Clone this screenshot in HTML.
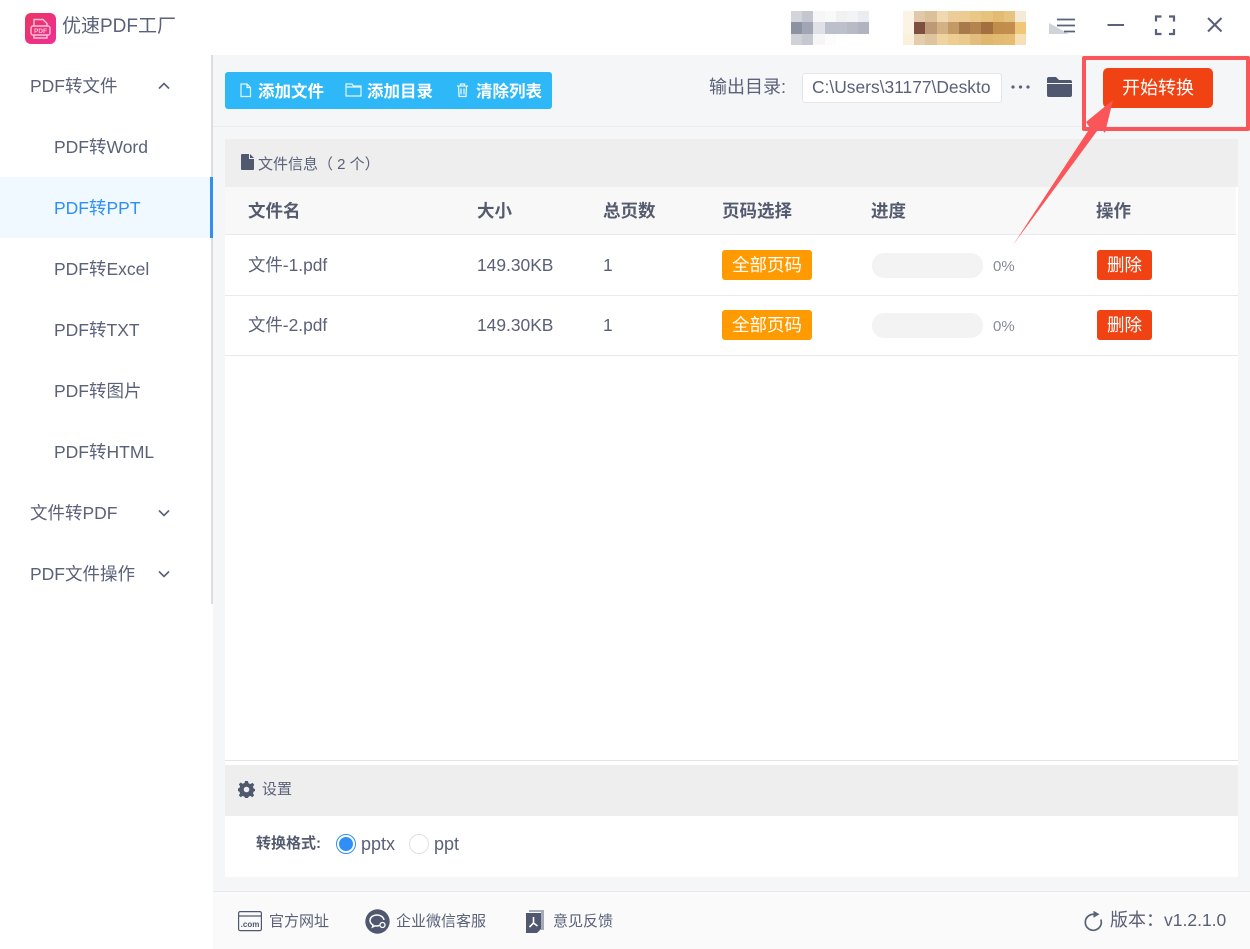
<!DOCTYPE html>
<html lang="zh-CN"><head><meta charset="utf-8"><title>优速PDF工厂</title>
<style>
*{margin:0;padding:0;box-sizing:border-box}
html,body{width:1250px;height:949px;overflow:hidden;background:#fff}
body{position:relative;font-family:"Liberation Sans","Noto Sans CJK SC",sans-serif;color:#5a6178}
.a{position:absolute}
.t{position:absolute;white-space:nowrap;line-height:20px}
.px{position:absolute;display:flex}
.px i{display:block;height:100%;flex:none;width:11.2px}
.b{font-weight:700;color:#555b6e;font-size:17.5px}
.s{font-size:17.4px;font-weight:400}
.m{font-size:17.5px}
.w{font-size:16.5px;font-weight:700;color:#fff}
.tag{position:absolute;height:30px;border-radius:3px;color:#fff;font-size:17.5px;line-height:30px;text-align:center}
svg{position:absolute;overflow:visible}
</style></head><body>

<!-- title bar -->
<div class="a" style="left:25px;top:13px;width:31px;height:31px;border-radius:6px;background:linear-gradient(135deg,#ea3560,#ef2f98)"></div>
<svg style="left:25px;top:13px" width="31" height="31" fill="none" stroke="#fbc3d6" stroke-width="1.4"><path d="M9 13V6.500h9l4 4V13"/><rect x="6" y="13" width="19" height="9" rx="2"/><path d="M9 22v3h13v-3"/><text x="15.500" y="20" font-size="6.500" font-weight="700" fill="#fbc3d6" stroke="none" text-anchor="middle" font-family="Liberation Sans">PDF</text></svg>
<div class="t" style="left:62px;top:17px;font-size:19px">优速PDF工厂</div>

<div class="px" style="left:791px;top:11px;height:11px"><i style="background:#d3d5db"></i><i style="background:#c4c7d0"></i><i style="background:#f6f6f8"></i><i style="background:#f9f9fa"></i><i style="background:#f0f1f3"></i><i style="background:#f2f3f5"></i><i style="background:#eaecef"></i></div>
<div class="px" style="left:791px;top:22px;height:12px"><i style="background:#8d92a2"></i><i style="background:#a2a6b4"></i><i style="background:#dfe1e6"></i><i style="background:#bcc0ca"></i><i style="background:#bcc0ca"></i><i style="background:#b8bbc6"></i><i style="background:#b0b4c0"></i></div>
<div class="px" style="left:791px;top:34px;height:11px"><i style="background:#cfd1d7"></i><i style="background:#c5c8cf"></i><i style="background:#f6f6f7"></i><i style="background:#fcfcfc"></i></div>

<div class="px" style="left:903px;top:11px;height:11px"><i style="background:#fbf4e6"></i><i style="background:#e0c8a8"></i><i style="background:#dcc09a"></i><i style="background:#f0d9b0"></i><i style="background:#eccd9a"></i><i style="background:#eccc92"></i><i style="background:#e9c887"></i><i style="background:#e7c27c"></i><i style="background:#e3bb72"></i><i style="background:#e6c37f"></i><i style="background:#f5ead8"></i></div>
<div class="px" style="left:903px;top:22px;height:12px"><i style="background:#fdf3e2"></i><i style="background:#7f4f42"></i><i style="background:#bd9a76"></i><i style="background:#d2b285"></i><i style="background:#c39a66"></i><i style="background:#a77a4a"></i><i style="background:#b3844f"></i><i style="background:#a27040"></i><i style="background:#c08d4c"></i><i style="background:#c18e4e"></i><i style="background:#f0c679"></i></div>
<div class="px" style="left:903px;top:34px;height:11px"><i style="background:#fbf0dc"></i><i style="background:#e3cdab"></i><i style="background:#dfc59f"></i><i style="background:#f0d49f"></i><i style="background:#eecd92"></i><i style="background:#ebc88c"></i><i style="background:#e3bd7e"></i><i style="background:#e0b76f"></i><i style="background:#e2ba72"></i><i style="background:#e4bc72"></i><i style="background:#f6dfb5"></i></div>

<svg style="left:1049px;top:23px" width="20" height="12"><path d="M0 0 L20 11 H0Z" fill="#d0d3db"/></svg>
<svg style="left:1055px;top:17px" width="22" height="18" stroke="#5a6178" stroke-width="1.700" fill="none"><path d="M2 2.500H20M2 8.500H20M9 14.500H20"/></svg>
<svg style="left:1106px;top:16px" width="20" height="20" stroke="#5a6178" stroke-width="2" fill="none"><path d="M1.500 9H18"/></svg>
<svg style="left:1155px;top:15px" width="21" height="21" stroke="#5a6178" stroke-width="2.200" fill="none"><path d="M1 6.500V1.500H6.500M14 1.500H19V6.500M19 14V19H14M6.500 19H1V14"/></svg>
<svg style="left:1206px;top:16px" width="18" height="18" stroke="#5a6178" stroke-width="2" fill="none"><path d="M2 2L15.500 15.500M15.500 2L2 15.500"/></svg>

<!-- sidebar -->
<div class="a" style="left:211px;top:55px;width:2px;height:549px;background:#dcdde3"></div>
<div class="t m" style="left:30px;top:76px">PDF转文件</div>
<svg style="left:157px;top:81px" width="14" height="10" stroke="#5a6178" stroke-width="1.600" fill="none"><path d="M2 7.500L7 2.500L12 7.500"/></svg>
<div class="t m" style="left:54px;top:137px">PDF转Word</div>
<div class="a" style="left:0;top:177px;width:213px;height:61px;background:#f0f9ff"></div>
<div class="a" style="left:210px;top:177px;width:3px;height:61px;background:#2f8ff4"></div>
<div class="t m" style="left:54px;top:198px;color:#2f8ff4">PDF转PPT</div>
<div class="t m" style="left:54px;top:259px">PDF转Excel</div>
<div class="t m" style="left:54px;top:320px">PDF转TXT</div>
<div class="t m" style="left:54px;top:381px">PDF转图片</div>
<div class="t m" style="left:54px;top:442px">PDF转HTML</div>
<div class="t m" style="left:30px;top:503px">文件转PDF</div>
<svg style="left:157px;top:508px" width="14" height="10" stroke="#5a6178" stroke-width="1.600" fill="none"><path d="M2 2.500L7 7.500L12 2.500"/></svg>
<div class="t m" style="left:30px;top:564px">PDF文件操作</div>
<svg style="left:157px;top:569px" width="14" height="10" stroke="#5a6178" stroke-width="1.600" fill="none"><path d="M2 2.500L7 7.500L12 2.500"/></svg>

<!-- main background -->
<div class="a" style="left:213px;top:55px;width:1037px;height:836px;background:#f5f6f8"></div>
<div class="a" style="left:213px;top:126px;width:1037px;height:1px;background:#ebecef"></div>

<!-- toolbar -->
<div class="a" style="left:225px;top:72px;width:327px;height:37px;border-radius:3px;background:#2eb8f8"></div>
<svg style="left:240px;top:83px" width="12" height="15" fill="none" stroke="#e4f6ff" stroke-width="1.200"><path d="M1 1H7L10.500 4.500V13.500H1Z M7 1V4.500H10.500"/></svg>
<div class="t w" style="left:258px;top:82px">添加文件</div>
<svg style="left:345px;top:83px" width="18" height="14" fill="none" stroke="#e4f6ff" stroke-width="1.200"><path d="M1 13V1H7L8.500 3H16V13Z M1 4H16"/></svg>
<div class="t w" style="left:367px;top:82px">添加目录</div>
<svg style="left:456px;top:83px" width="13" height="15" fill="none" stroke="#e4f6ff" stroke-width="1.300"><path d="M1 3H12M4.500 3V1H8.500V3M2.500 3L3 13.500H10L10.500 3M5 5.500V11.500M8 5.500V11.500"/></svg>
<div class="t w" style="left:476px;top:82px">清除列表</div>

<div class="t" style="left:709px;top:77px;font-size:18px">输出目录:</div>
<div class="a" style="left:802px;top:73px;width:200px;height:30px;background:#fff;border:1px solid #e3e5ea;border-radius:3px"></div>
<div class="t" style="left:812px;top:77px;font-size:17.4px;width:185px;overflow:hidden">C:\Users\31177\Deskto</div>
<svg style="left:1011px;top:84px" width="20" height="6" fill="#5a6178"><circle cx="2" cy="3" r="1.600"/><circle cx="9.500" cy="3" r="1.600"/><circle cx="17" cy="3" r="1.600"/></svg>
<svg style="left:1047px;top:76px" width="25" height="22" fill="#50586f"><path d="M0 3Q0 1 2 1H9L12 4H23Q25 4 25 6V7H0Z"/><path d="M0 8H25V19Q25 21 23 21H2Q0 21 0 19Z"/></svg>

<div class="tag" style="left:1103px;top:68px;width:110px;height:40px;line-height:40px;font-size:18px;background:#f04212;border-radius:5px">开始转换</div>

<!-- panel -->
<div class="a" style="left:225px;top:139px;width:1013px;height:738px;background:#fff"></div>
<div class="a" style="left:225px;top:139px;width:1013px;height:48px;background:#eeeeee"></div>
<svg style="left:241px;top:154px" width="13" height="16" fill="#50586f"><path d="M0 1Q0 0 1 0H8V5H13V15Q13 16 12 16H1Q0 16 0 15Z"/><path d="M9 0L13 4H9Z"/></svg>
<div class="t" style="left:258px;top:155px;font-size:15px">文件信息（ 2 个）</div>

<div class="a" style="left:225px;top:187px;width:1011px;height:48px;background:#f8f8f9;border-bottom:1px solid #e8e9ec"></div>
<div class="t b" style="left:248px;top:201px">文件名</div>
<div class="t b" style="left:477px;top:201px">大小</div>
<div class="t b" style="left:603px;top:201px">总页数</div>
<div class="t b" style="left:722px;top:201px">页码选择</div>
<div class="t b" style="left:871px;top:201px">进度</div>
<div class="t b" style="left:1096px;top:201px">操作</div>

<div class="a" style="left:225px;top:295px;width:1013px;height:1px;background:#e8e9ec"></div>
<div class="a" style="left:225px;top:355px;width:1013px;height:1px;background:#e8e9ec"></div>

<div class="t s" style="left:248px;top:255px">文件-1.pdf</div>
<div class="t s" style="left:477px;top:255px">149.30KB</div>
<div class="t s" style="left:603px;top:255px">1</div>
<div class="tag" style="left:722px;top:250px;width:90px;background:#ff9a00">全部页码</div>
<div class="a" style="left:872px;top:253px;width:111px;height:25px;border-radius:12px;background:#f3f3f4"></div>
<div class="t" style="left:993px;top:257px;font-size:15px;color:#868b9b">0%</div>
<div class="tag" style="left:1097px;top:250px;width:55px;background:#f04212">删除</div>

<div class="t s" style="left:248px;top:315px">文件-2.pdf</div>
<div class="t s" style="left:477px;top:315px">149.30KB</div>
<div class="t s" style="left:603px;top:315px">1</div>
<div class="tag" style="left:722px;top:310px;width:90px;background:#ff9a00">全部页码</div>
<div class="a" style="left:872px;top:313px;width:111px;height:25px;border-radius:12px;background:#f3f3f4"></div>
<div class="t" style="left:993px;top:317px;font-size:15px;color:#868b9b">0%</div>
<div class="tag" style="left:1097px;top:310px;width:55px;background:#f04212">删除</div>

<!-- settings -->
<div class="a" style="left:225px;top:760px;width:1013px;height:1px;background:#e3e4e8"></div>
<div class="a" style="left:225px;top:765px;width:1013px;height:51px;background:#eeeeee"></div>
<svg style="left:238px;top:781px" width="17" height="17" viewBox="0 0 17 17" fill="#50586f"><path fill-rule="evenodd" d="M7 0H10L10.500 2.300 12.400 3.100 14.400 1.800 16.200 3.800 14.900 5.700 15.700 7.600 17 8V10L15.700 10.600 14.900 12.400 16.200 14.300 14.300 16.200 12.400 14.900 10.500 15.700 10 17H7L6.500 15.700 4.600 14.900 2.700 16.200 .8 14.300 2.100 12.400 1.300 10.600 0 10V7.500L1.300 7.100 2.100 5.300 .8 3.400 2.700 1.500 4.600 2.800 6.500 2Z M8.500 5.700A2.800 2.800 0 1 0 8.500 11.300A2.800 2.800 0 1 0 8.500 5.700Z"/></svg>
<div class="t" style="left:262px;top:780px;font-size:15px">设置</div>
<div class="t" style="left:256px;top:834px;font-size:15px;font-weight:700;color:#555b6e">转换格式:</div>
<div class="a" style="left:336px;top:834px;width:20px;height:20px;border-radius:50%;border:1px solid #2f8ff4;background:#fff"></div>
<div class="a" style="left:339px;top:837px;width:14px;height:14px;border-radius:50%;background:#2f8ff4"></div>
<div class="t" style="left:361px;top:834px;font-size:18px">pptx</div>
<div class="a" style="left:409px;top:834px;width:20px;height:20px;border-radius:50%;border:1px solid #dfe1e6;background:#fff"></div>
<div class="t" style="left:434px;top:834px;font-size:18px">ppt</div>

<!-- footer -->
<div class="a" style="left:213px;top:891px;width:1037px;height:58px;background:#fafafb;border-top:1px solid #e8e9ec"></div>
<svg style="left:238px;top:911px" width="24" height="21" fill="none" stroke="#50586f" stroke-width="1.200"><rect x=".6" y=".6" width="22.800" height="19" rx="1.500"/><path d="M.6 5H23.400"/><text x="12" y="16" font-size="8" font-weight="700" fill="#50586f" stroke="none" text-anchor="middle" font-family="Liberation Sans">.com</text></svg>
<div class="t" style="left:269px;top:912px;font-size:15px">官方网址</div>
<svg style="left:365px;top:909px" width="25" height="25"><circle cx="12.500" cy="12.500" r="12.200" fill="#50586f"/><path d="M12 6C7.800 6 5 8.500 5 11.500C5 13.500 6.300 15 8 16L7.500 18L10 16.800C11.500 17.200 13 17 14.500 16.500" fill="none" stroke="#fff" stroke-width="1.500"/><path d="M12 6C15.500 6 18.500 8 19 11" fill="none" stroke="#fff" stroke-width="1.500"/><circle cx="17.500" cy="16" r="2.500" fill="none" stroke="#fff" stroke-width="1.300"/></svg>
<div class="t" style="left:396px;top:912px;font-size:15px">企业微信客服</div>
<svg style="left:526px;top:910px" width="19" height="24"><path d="M3 0H18V20H15V2H3Z" fill="#a6aab7"/><path d="M0 3H15V23H0Z" fill="#50586f"/><path d="M7.500 7V13M7.500 13L3.500 17M7.500 13L11.500 16" stroke="#fff" stroke-width="1.600" fill="none"/><path d="M11 23L15 19V23Z" fill="#fff"/></svg>
<div class="t" style="left:553px;top:912px;font-size:15px">意见反馈</div>
<svg style="left:1083px;top:910px" width="20" height="22" fill="none"><path d="M12.500 4.600A8 8 0 1 0 17.800 9.500" stroke="#5a6178" stroke-width="1.700"/><path d="M10.500 .8L16.500 4.300L10.500 7.800Z" fill="#5a6178"/></svg>
<div class="t" style="left:1110px;top:910px;font-size:18px">版本：<span style="font-size:17.5px">v1.2.1.0</span></div>

<!-- annotation -->
<div class="a" style="left:1082px;top:56px;width:168px;height:75px;border:4px solid #fa5558;border-radius:2px"></div>
<svg style="left:0;top:0" width="1250" height="949"><path d="M1113 100L1105 133L1100 127L1013 245L1090 128L1086 122Z" fill="#fa5558"/></svg>

</body></html>
